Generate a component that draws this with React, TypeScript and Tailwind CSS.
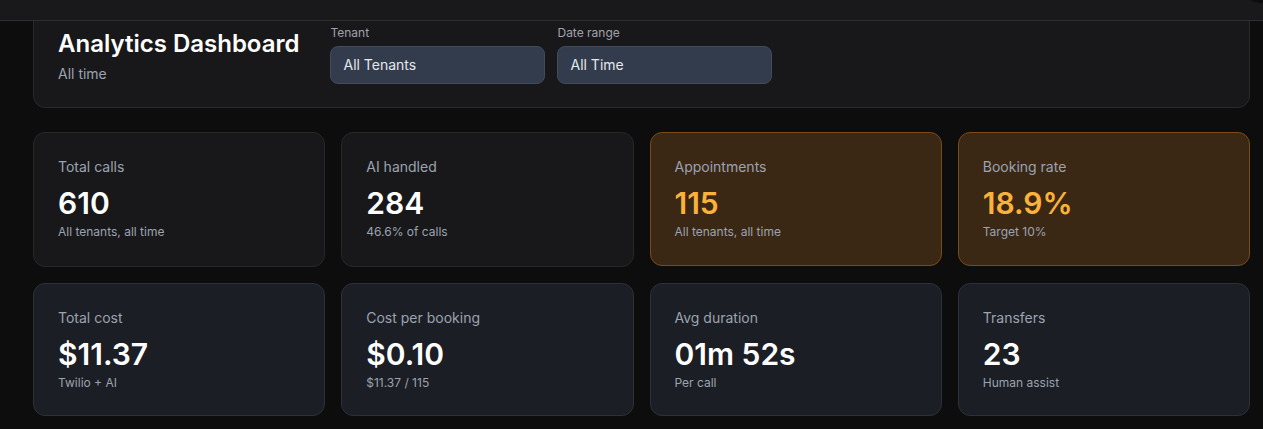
import React from 'react';

type Tone = 'plain' | 'accent' | 'slate';

interface Metric {
    label: string;
    value: string;
    hint: string;
    tone: Tone;
}

const metrics: Metric[] = [
    { label: 'Total calls', value: '610', hint: 'All tenants, all time', tone: 'plain' },
    { label: 'AI handled', value: '284', hint: '46.6% of calls', tone: 'plain' },
    { label: 'Appointments', value: '115', hint: 'All tenants, all time', tone: 'accent' },
    { label: 'Booking rate', value: '18.9%', hint: 'Target 10%', tone: 'accent' },
    { label: 'Total cost', value: '$11.37', hint: 'Twilio + AI', tone: 'slate' },
    { label: 'Cost per booking', value: '$0.10', hint: '$11.37 / 115', tone: 'slate' },
    { label: 'Avg duration', value: '01m 52s', hint: 'Per call', tone: 'slate' },
    { label: 'Transfers', value: '23', hint: 'Human assist', tone: 'slate' },
];

const toneMap: Record<Tone, { card: string; value: string }> = {
    plain: { card: 'h-[135px] border-[#27272a] bg-[#18181b]', value: 'text-white' },
    accent: { card: 'h-[134px] border-[#7a4a18] bg-[#3a2815]', value: 'text-[#fbb23a]' },
    slate: { card: 'h-[133px] border-[#2c3038] bg-[#1b1e25]', value: 'text-white' },
};

const MetricCard: React.FC<{ metric: Metric }> = ({ metric }) => {
    const tone = toneMap[metric.tone];
    return (
        <div className={`flex flex-col rounded-xl border px-6 pt-6 ${tone.card}`}>
            <p className="text-sm leading-5 text-[#9ca3af]">{metric.label}</p>
            <p className={`mt-2 text-[30px] font-semibold leading-9 ${tone.value}`}>{metric.value}</p>
            <p className="mt-[3px] text-xs leading-4 text-[#9ca3af]">{metric.hint}</p>
        </div>
    );
};

const SelectBox: React.FC<{ label: string; value: string }> = ({ label, value }) => (
    <div className="flex w-[215px] flex-col">
        <span className="text-xs leading-4 text-[#a1a1aa]">{label}</span>
        <div className="mt-[5px] flex h-[38px] items-center rounded-lg border border-[#414b5b] bg-[#323c4c] px-3 text-sm text-[#e5e7eb]">
            {value}
        </div>
    </div>
);

export default function App() {
    return (
        <div className="relative h-[429px] w-full overflow-hidden bg-[#0d0d0e] font-['Inter','Liberation_Sans',sans-serif]">
            {/* sticky top bar sits over the scrolled content */}
            <div className="absolute inset-x-0 top-0 z-10 h-[21px] border-b border-[#2e2e33] bg-[#19191c]">
                <div className="absolute right-[-16px] top-[-34px] h-[37px] w-[37px] rounded-full bg-[#0d0d0e]" />
            </div>

            <main className="ml-[33px] w-[1217px]">
                <section className="flex items-end gap-[31px] rounded-xl border border-[#29292d] bg-[#18181b] px-6 pb-[23px] pt-6">
                    <div className="flex flex-col">
                        <h1 className="text-2xl font-semibold leading-8 text-white">Analytics Dashboard</h1>
                        <p className="mt-1 text-sm leading-5 text-[#9ca3af]">All time</p>
                    </div>
                    <div className="flex gap-3">
                        <SelectBox label="Tenant" value="All Tenants" />
                        <SelectBox label="Date range" value="All Time" />
                    </div>
                </section>

                <div className="mt-6 grid grid-cols-4 items-start gap-4">
                    {metrics.map(metric => (
                        <MetricCard key={metric.label} metric={metric} />
                    ))}
                </div>
            </main>
        </div>
    );
}
